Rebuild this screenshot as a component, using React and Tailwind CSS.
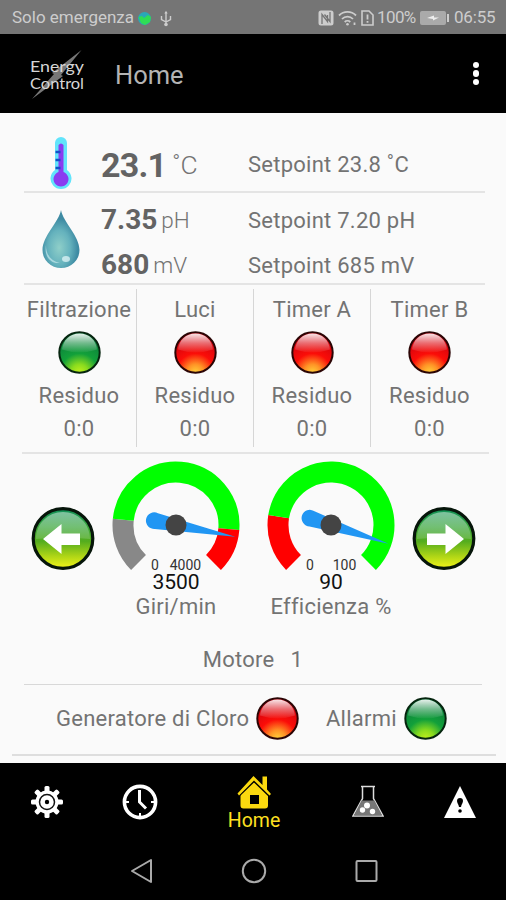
import { useId } from "react";

const channels = [
  { name: "Filtrazione", color: "green", residue: "0:0" },
  { name: "Luci", color: "red", residue: "0:0" },
  { name: "Timer A", color: "red", residue: "0:0" },
  { name: "Timer B", color: "red", residue: "0:0" },
];

const GAUGE_START = 135;
const GAUGE_SWEEP = 270;

const polar = (r, deg) => {
  const a = (deg * Math.PI) / 180;
  return `${(64 + r * Math.cos(a)).toFixed(2)} ${(64 + r * Math.sin(a)).toFixed(2)}`;
};

const arcPath = (from, to) => {
  const a = GAUGE_START + from * GAUGE_SWEEP;
  const b = GAUGE_START + to * GAUGE_SWEEP;
  const large = b - a > 180 ? 1 : 0;
  return `M${polar(53, a)} A53 53 0 ${large} 1 ${polar(53, b)}`;
};

const Lamp = ({ color }) => {
  const id = useId();
  const green = color === "green";
  return (
    <svg width="43" height="43" viewBox="0 0 43 43" className="shrink-0">
      <defs>
        <radialGradient id={`${id}b`} cx="0.5" cy="1" r="0.95">
          <stop offset="0" stopColor={green ? "#c2f01c" : "#ffd23a"} />
          <stop offset="0.22" stopColor={green ? "#8bdc1e" : "#ff9326"} />
          <stop offset="0.5" stopColor={green ? "#12a03a" : "#fb0d08"} />
          <stop offset="1" stopColor={green ? "#0b7a3c" : "#c80010"} />
        </radialGradient>
        <linearGradient id={`${id}g`} x1="0" y1="0" x2="0" y2="1">
          <stop offset="0" stopColor="#fff" stopOpacity="0.9" />
          <stop offset="0.5" stopColor="#fff" stopOpacity="0.42" />
          <stop offset="1" stopColor="#fff" stopOpacity="0.03" />
        </linearGradient>
      </defs>
      <circle cx="21.5" cy="21.5" r="20.2" fill={`url(#${id}b)`} stroke={green ? "#06250f" : "#2b0505"} strokeWidth="2" />
      <path d="M4 18.500C5 9 12 2.500 21.500 2.500S38 9 39 18.500Q21.500 24.500 4 18.500Z" fill={`url(#${id}g)`} />
    </svg>
  );
};

const ArrowButton = ({ direction }) => {
  const id = useId();
  return (
    <button type="button" className="h-16 w-16 shrink-0">
      <svg width="64" height="64" viewBox="0 0 64 64">
        <defs>
          <linearGradient id={`${id}b`} x1="0" y1="0" x2="0" y2="1">
            <stop offset="0" stopColor="#0f8f58" />
            <stop offset="0.3" stopColor="#3aa63c" />
            <stop offset="0.55" stopColor="#55ad1e" />
            <stop offset="0.8" stopColor="#b0d616" />
            <stop offset="1" stopColor="#f2f41a" />
          </linearGradient>
          <linearGradient id={`${id}g`} x1="0" y1="0" x2="0" y2="1">
            <stop offset="0" stopColor="#fff" stopOpacity="0.45" />
            <stop offset="1" stopColor="#fff" stopOpacity="0.15" />
          </linearGradient>
        </defs>
        <circle cx="32" cy="32.500" r="29.800" fill={`url(#${id}b)`} stroke="#06150a" strokeWidth="3.200" />
        <path d="M5 33C5 18 17 6 32 6s27 12 27 27Q32 30 5 33Z" fill={`url(#${id}g)`} />
        <path
          d="M12 33 30.500 18v9.500H49V39H30.500v9Z"
          fill="#fff"
          transform={direction === "right" ? "translate(64 0) scale(-1 1)" : undefined}
        />
      </svg>
    </button>
  );
};

const Gauge = ({ value, max, zones, label }) => {
  const angle = GAUGE_START + (value / max) * GAUGE_SWEEP;
  return (
    <div className="flex w-32 flex-col items-center">
      <svg width="128" height="132" viewBox="0 0 128 132" className="font-[Roboto,sans-serif] tracking-normal">
        {zones.map((z) => (
          <path key={z.from} d={arcPath(z.from, z.to)} fill="none" stroke={z.color} strokeWidth="21" />
        ))}
        <path
          d="M60.500 0 -20 8A8.300 8.300 0 1 1 -20 -8Z"
          fill="#2196f3"
          transform={`translate(64 64) rotate(${angle})`}
        />
        <circle cx="64" cy="64" r="10.500" fill="#444" />
        <text x="43" y="108.500" fontSize="14" textAnchor="middle" fill="#333">0</text>
        <text x={max > 999 ? 73.5 : 77.5} y="108.500" fontSize="14" textAnchor="middle" fill="#333">{max}</text>
        <text x="64" y="127.500" fontSize="21" textAnchor="middle" fill="#111">{value}</text>
      </svg>
      <span className="mt-px whitespace-nowrap leading-[26px]">{label}</span>
    </div>
  );
};

const StatusBar = () => (
  <div className="flex h-[34px] items-center bg-[#757575] pl-3 pr-[10px] pt-[2px] text-[17px] text-[#cdcdcd]">
    <span className="w-[121px] whitespace-nowrap">Solo emergenza</span>
    <svg width="15" height="15" viewBox="0 0 15 15" className="ml-1">
      <circle cx="7.500" cy="7.500" r="6.500" fill="#2aa7b8" />
      <path d="M1.500 6 5 5l2 2 4-3 3 2-1 5-5 3-4-2Z" fill="#2fdc55" />
    </svg>
    <svg width="12" height="17" viewBox="0 0 12 17" className="ml-[8px]" fill="none" stroke="#cdcdcd" strokeWidth="1.400">
      <path d="M6 2v12M1.500 6v3.500L6 12l4.500-2.500V6" />
      <path d="M4.300 3.500 6 .8l1.700 2.700Z" fill="#cdcdcd" stroke="none" />
      <circle cx="6" cy="14.500" r="1.800" fill="#cdcdcd" stroke="none" />
    </svg>
    <div className="ml-auto flex items-center">
      <svg width="16" height="16" viewBox="0 0 16 16">
        <path d="M3 .5h10A2.500 2.500 0 0 1 15.500 3v10a2.500 2.500 0 0 1-2.500 2.500H3A2.500 2.500 0 0 1 .5 13V3A2.500 2.500 0 0 1 3 .5Z" fill="#cdcdcd" />
        <path d="M4 14V4.500l5.500 7V5M12 2v9.500L6.500 4.500" fill="none" stroke="#757575" strokeWidth="1.300" />
      </svg>
      <svg width="19" height="16" viewBox="0 0 19 16" className="ml-1" fill="none" stroke="#cdcdcd" strokeWidth="1.800">
        <path d="M1 5.500a12 12 0 0 1 17 0M4 9a7.500 7.500 0 0 1 11 0M6.700 12a4 4 0 0 1 5.600 0" />
        <circle cx="9.500" cy="14.200" r="1.300" fill="#cdcdcd" stroke="none" />
        <path d="M16.500 12.500v2.500" />
      </svg>
      <svg width="13" height="16" viewBox="0 0 13 16" className="ml-1" fill="none" stroke="#cdcdcd" strokeWidth="1.600">
        <path d="M1 1h7l4 4v10H1Z" />
        <path d="M6.500 4.500v5M6.500 11v1.800" strokeWidth="1.800" />
      </svg>
      <span className="ml-[3px] w-[40px] whitespace-nowrap tracking-[-0.6px]">100%</span>
      <svg width="30" height="16" viewBox="0 0 30 16" className="ml-[3px]">
        <rect x="0" y="1" width="26" height="14" rx="2" fill="#aaa" />
        <rect x="27" y="4" width="2" height="8" fill="#cdcdcd" />
        <path d="m7 8 7-2.500v2h5L13 10.500V9Z" fill="#eee" />
      </svg>
      <span className="ml-1 w-[42px] whitespace-nowrap tracking-[-0.2px]">06:55</span>
    </div>
  </div>
);

const AppBar = () => (
  <header className="flex h-[79px] items-center bg-black pl-[28px] pr-[22px]">
    <svg width="58" height="54" viewBox="0 0 58 54" fill="#d6d6d6" className="font-[Lato,sans-serif]">
      <path d="M53.500 3 33 28l2 1L4 52l22-25-2-1Z" fill="#777" />
      <text x="2" y="24.500" fontSize="15" textLength="54" lengthAdjust="spacingAndGlyphs">Energy</text>
      <text x="2" y="41.500" fontSize="15" textLength="54" lengthAdjust="spacingAndGlyphs">Control</text>
    </svg>
    <h1 className="ml-[29px] pt-[3px] text-[25.500px] text-[#b4b4b4]">Home</h1>
    <button type="button" className="ml-auto flex w-4 flex-col items-center gap-[2px]">
      <span className="h-[6.500px] w-[6.500px] rounded-full bg-white" />
      <span className="h-[6.500px] w-[6.500px] rounded-full bg-white" />
      <span className="h-[6.500px] w-[6.500px] rounded-full bg-white" />
    </button>
  </header>
);

const Thermometer = () => (
  <svg width="22" height="54" viewBox="0 0 22 54">
    <path d="M5 6a6 6 0 0 1 12 0v27a10.500 10.500 0 1 1-12 0Z" fill="#62e4fb" />
    <path d="M8.500 8q2.500-3 5 0v27a7.500 7.500 0 1 1-5 0Z" fill="#8a3cf0" />
    <path d="M5.500 15h5M5.500 23h5M5.500 31h5" stroke="#1550c8" strokeWidth="2.500" />
  </svg>
);

const Drop = () => (
  <svg width="38" height="60" viewBox="0 0 38 60">
    <defs>
      <radialGradient id="dropFill" cx="0.45" cy="0.65" r="0.5">
        <stop offset="0" stopColor="#8fcfc9" />
        <stop offset="0.6" stopColor="#65b2bd" />
        <stop offset="1" stopColor="#3e8ba3" />
      </radialGradient>
    </defs>
    <path d="M19 1C21 13 37.500 27 37.500 41a18.500 18 0 0 1-37 0C.5 27 17 13 19 1Z" fill="url(#dropFill)" />
    <path d="M4 36c0 10 5 16 14 18C8 55 2 47 4 36Z" fill="#c5e8ec" opacity="0.7" />
    <ellipse cx="24" cy="50" rx="4" ry="3" fill="#e8fafb" opacity="0.7" />
  </svg>
);

const BottomNav = () => (
  <nav className="flex h-[77px] bg-black pl-[29px] text-white">
    <button type="button" className="flex h-[77px] w-9 items-center justify-center">
      <svg width="32" height="32" viewBox="0 0 32 32">
        <g fill="#fff">
          {[0, 45, 90, 135].map((deg) => (
            <rect key={deg} x="13.500" y="0" width="5" height="32" rx="1.500" transform={`rotate(${deg} 16 16)`} />
          ))}
          <circle cx="16" cy="16" r="11.500" />
        </g>
        <circle cx="16" cy="16" r="7.500" fill="none" stroke="#111" strokeWidth="1.500" />
        <circle cx="16" cy="16" r="2.200" fill="#000" />
      </svg>
    </button>
    <button type="button" className="ml-[57px] flex h-[77px] w-9 items-center justify-center">
      <svg width="36" height="36" viewBox="0 0 36 36" fill="none" stroke="#fff">
        <circle cx="18" cy="18" r="15.600" strokeWidth="3.600" />
        <path d="M17.500 6v12l6.500 6.500" strokeWidth="3" />
        <path d="M18 29v3M4 18h3M29 18h3" strokeWidth="2" />
      </svg>
    </button>
    <button type="button" className="ml-[66px] flex w-[60px] flex-col items-center pt-3 text-[#ffe020]">
      <svg width="34" height="34" viewBox="0 0 34 34" fill="#fbd90f">
        <path d="M3.500 19 17 6.500 31 19v11.500a3 3 0 0 1-3 3H6.500a3 3 0 0 1-3-3Z" />
        <path d="M13 20h9v9h-9Z" fill="#000" />
        <path d="M2.500 20.500 17 6.500l14.500 14" fill="none" stroke="#000" strokeWidth="1.500" />
        <path d="m.500 18.500 16-17.500 9 9V1.500h4.500V14.500l4 4.500-1.500 1.500L17 5.500 2 20.500Z" />
      </svg>
      <span className="text-[19.500px] leading-[24px]">Home</span>
    </button>
    <button type="button" className="ml-[66px] flex h-[77px] w-9 items-center justify-center">
      <svg width="32" height="33" viewBox="0 0 32 33">
        <path d="M10.500 1.500v12L1 31h30l-9.500-17.500v-12" fill="#000" stroke="#ddd" strokeWidth="1.500" />
        <path d="M9.500 15.500h13L30 30.500H2Z" fill="#777" />
        <path d="M9 1.500h14" stroke="#ddd" strokeWidth="1.500" />
        <g fill="#fff">
          <circle cx="15" cy="20.500" r="3" />
          <circle cx="10.500" cy="25" r="2.700" />
          <circle cx="20.500" cy="26.500" r="2.700" />
        </g>
      </svg>
    </button>
    <button type="button" className="ml-[56px] flex h-[77px] w-9 items-center justify-center">
      <svg width="32" height="32" viewBox="0 0 32 32">
        <path d="m16 0 16 32H0Z" fill="#fff" />
        <path d="M16 12a3 3 0 0 1 3 3c0 2-1.500 3-2 6h-2c-.5-3-2-4-2-6a3 3 0 0 1 3-3Z" />
        <circle cx="16" cy="25" r="1.800" />
      </svg>
    </button>
  </nav>
);

const SystemNav = () => (
  <div className="flex h-[60px] justify-center gap-[88px] bg-black pl-px">
    <svg width="24" height="60" viewBox="0 0 24 60" fill="none" stroke="#aaa" strokeWidth="2">
      <path d="M3 31 22 20v22Z" strokeLinejoin="round" />
    </svg>
    <svg width="26" height="60" viewBox="0 0 26 60" fill="none" stroke="#aaa" strokeWidth="2">
      <circle cx="13" cy="31" r="11.200" />
    </svg>
    <svg width="24" height="60" viewBox="0 0 24 60" fill="none" stroke="#aaa" strokeWidth="2">
      <rect x="1.500" y="21" width="20" height="20" rx="1" />
    </svg>
  </div>
);

const Reading = ({ value, unit, setpoint }) => (
  <div className="flex h-8 items-center whitespace-nowrap">
    <div className="flex w-[147px] items-center gap-1 tracking-normal">
      <span className="text-[28px] font-bold leading-8 text-[#636363]">{value}</span>
      <span className="text-[22.500px] font-light leading-8">{unit}</span>
    </div>
    <span>{setpoint}</span>
  </div>
);

const App = () => {
  return (
    <div className="flex h-[900px] w-[506px] flex-col overflow-hidden bg-[#fafafa] font-[Roboto,sans-serif] text-[22px] text-[#737373]">
      <StatusBar />
      <AppBar />
      <main className="flex h-[650px] flex-col tracking-[0.25px]">
        {/* temperature */}
        <section className="ml-[24px] mr-[21px] flex h-[80px] items-center border-b-2 border-[#e4e4e4] pt-[24px]">
          <div className="flex w-[77px] pl-[26px]">
            <Thermometer />
          </div>
          <div className="flex w-[147px] items-center whitespace-nowrap tracking-normal">
            <span className="pt-px text-[34px] font-bold leading-none tracking-[-0.8px] text-[#636363]">23.1</span>
            <span className="ml-1.5 pt-[2px] text-[26.500px] font-light leading-none">˚C</span>
          </div>
          <span className="whitespace-nowrap pt-px">Setpoint 23.8 ˚C</span>
        </section>

        {/* pH and redox */}
        <section className="ml-[24px] mr-[21px] flex h-[92px] items-center border-b-2 border-[#e4e4e4]">
          <div className="flex w-[77px] pl-[18px] pt-px">
            <Drop />
          </div>
          <div className="flex flex-col gap-[13px] pt-[9px]">
            <Reading value="7.35" unit="pH" setpoint="Setpoint 7.20 pH" />
            <Reading value="680" unit="mV" setpoint="Setpoint 685 mV" />
          </div>
        </section>

        {/* channels */}
        <section className="ml-[22px] mr-[17px] flex h-[169px] border-b-2 border-[#e4e4e4] pb-[5px] pt-1">
          {channels.map((ch) => (
            <div
              key={ch.name}
              className="flex w-[117px] flex-col items-center border-r border-[#d6d6d6] pt-2 first:w-[115px] last:border-r-0"
            >
              <span className="leading-[26px]">{ch.name}</span>
              <div className="mt-[8px]">
                <Lamp color={ch.color} />
              </div>
              <span className="mt-[9px] leading-[26px]">Residuo</span>
              <span className="mt-[7px] leading-[26px]">{ch.residue}</span>
            </div>
          ))}
        </section>

        {/* motor */}
        <section className="mx-[24px] flex h-[231px] flex-col border-b border-[#d8d8d8] pt-[7px]">
          <div className="flex">
            <div className="ml-[7px] mt-[45px]">
              <ArrowButton direction="left" />
            </div>
            <div className="ml-[17px]">
              <Gauge
                value={3500}
                max={4000}
                label="Giri/min"
                zones={[
                  { from: 0, to: 0.1875, color: "#888888" },
                  { from: 0.1875, to: 0.85, color: "#00ff00" },
                  { from: 0.85, to: 1, color: "#ff0000" },
                ]}
              />
            </div>
            <div className="ml-[27px]">
              <Gauge
                value={90}
                max={100}
                label="Efficienza %"
                zones={[
                  { from: 0, to: 0.2, color: "#ff0000" },
                  { from: 0.2, to: 1, color: "#00ff00" },
                ]}
              />
            </div>
            <div className="ml-[17px] mt-[45px]">
              <ArrowButton direction="right" />
            </div>
          </div>
          <div className="mt-[27px] flex justify-center gap-4 leading-[26px]">
            <span>Motore</span>
            <span>1</span>
          </div>
        </section>

        <section className="ml-3 mr-[10px] flex h-[71px] items-center whitespace-nowrap border-b-2 border-[#dedede] pb-[3px] pl-[44px]">
          <span className="w-[200px] pt-px">Generatore di Cloro</span>
          <Lamp color="red" />
          <span className="ml-[27px] w-[78px] pt-px">Allarmi</span>
          <Lamp color="green" />
        </section>
      </main>
      <BottomNav />
      <SystemNav />
    </div>
  );
};

export default App;
